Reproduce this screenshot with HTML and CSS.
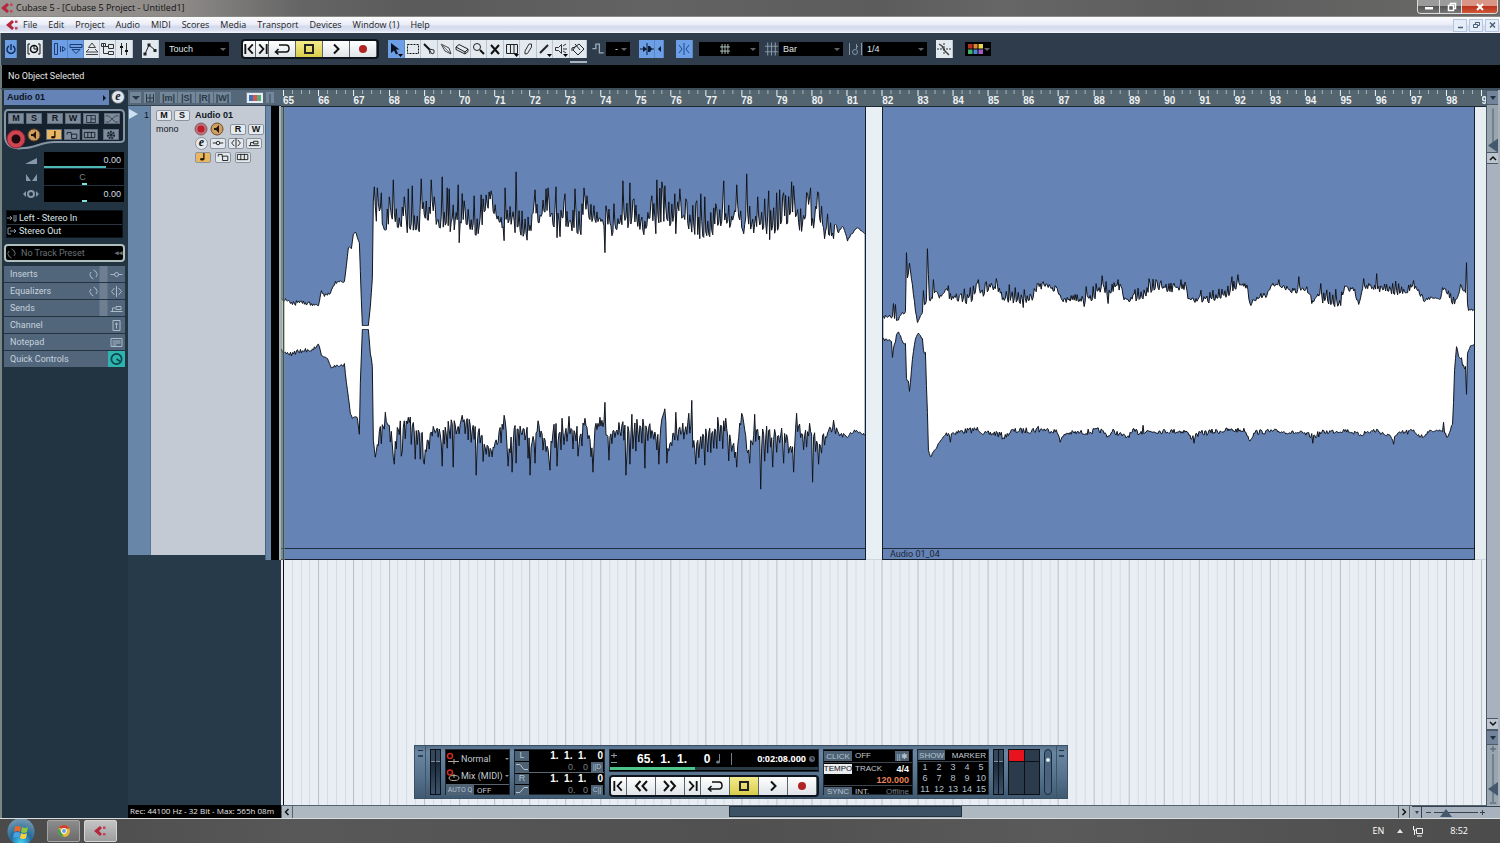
FILE: index.html
```html
<!DOCTYPE html>
<html lang="en">
<head>
    <meta charset="UTF-8">
    <meta name="viewport" content="width=device-width, initial-scale=1.0">
    <title>Cubase 5 - [Cubase 5 Project - Untitled1]</title>
    <link rel="stylesheet" href="styles.css">
</head>
<body>

    <!-- Shared icons -->
    <svg class="sprite" width="0" height="0" aria-hidden="true">
        <symbol id="i-logo" viewBox="0 0 14 12"><path d="M6 1 0 6l6 5 2-2-3-3 3-3z" fill="#b5283c"/><path d="M9 1.500h2.500v2.500H9zM9 8h2.500v2.500H9z" fill="#c4455a"/></symbol>
        <symbol id="i-power" viewBox="0 0 12 16"><path d="M4 5a4 4 0 1 0 4 0M6 3v6" fill="none" stroke="#12305c" stroke-width="1.500"/></symbol>
        <symbol id="i-clock" viewBox="0 0 16 16"><path d="M4 3H2v10h2M12 3h2v10h-2" fill="none" stroke="#111"/><circle cx="8" cy="8" r="3.500" fill="none" stroke="#111" stroke-width="1.500"/><path d="M8 5v3h3" fill="none" stroke="#111"/></symbol>
        <symbol id="i-insp" viewBox="0 0 16 16"><path d="M2.500 2.500h3v11h-3zM8.500 5v6M10.500 5.500l3 2.500-3 2.500z" fill="none" stroke="#1d3c70"/></symbol>
        <symbol id="i-info" viewBox="0 0 16 16"><path d="M2 3.500h12v3H2zM4 8.500h8l-4 4z" fill="none" stroke="#1d3c70"/></symbol>
        <symbol id="i-over" viewBox="0 0 16 16"><path d="M8 2 4.500 6.500h7zM5 8l-3 3h12l-3-3M2 13.500h12" fill="none" stroke="#444"/></symbol>
        <symbol id="i-pool" viewBox="0 0 16 16"><path d="M3.500 2v10.500H8M3.500 5.500H8M8.500 3.500h5v4h-5zM8.500 10.500h5v3h-5zM1.500 2.500h4v3h-4z" fill="none" stroke="#333"/></symbol>
        <symbol id="i-mixer" viewBox="0 0 16 16"><path d="M5.500 2v12M10.500 2v12" stroke="#333"/><path d="M4 6h3M9 10h3" stroke="#111" stroke-width="2"/></symbol>
        <symbol id="i-auto" viewBox="0 0 16 16"><path d="m3 13 4-9 6 5" fill="none" stroke="#222"/><path d="M1.500 11.500h3v3h-3zM5.500 2.500h3v3h-3zM11.500 8h3v3h-3z" fill="#222"/></symbol>
        <symbol id="i-prev" viewBox="0 0 14 14"><path d="M2.500 1.500v11M10.500 2 6 7l4.500 5" fill="none" stroke="#111" stroke-width="2"/></symbol>
        <symbol id="i-next" viewBox="0 0 14 14"><path d="M11.500 1.500v11M3.500 2 8 7l-4.500 5" fill="none" stroke="#111" stroke-width="2"/></symbol>
        <symbol id="i-cycle" viewBox="0 0 18 14"><path d="M6 3h7a3 3.500 0 0 1 0 7H2M5.500 7 2.500 10l3 2.500" fill="none" stroke="#111" stroke-width="1.500"/></symbol>
        <symbol id="i-stop" viewBox="0 0 14 14"><path d="M3 3h8v8H3z" fill="none" stroke="#222" stroke-width="2"/></symbol>
        <symbol id="i-play" viewBox="0 0 14 14"><path d="m5 2.500 4.500 4.500L5 11.500" fill="none" stroke="#111" stroke-width="2"/></symbol>
        <symbol id="i-rew" viewBox="0 0 16 14"><path d="M7.500 2 3 7l4.500 5M14 2 9.500 7l4.500 5" fill="none" stroke="#111" stroke-width="2"/></symbol>
        <symbol id="i-ffw" viewBox="0 0 16 14"><path d="M2 2l4.500 5L2 12M8.500 2 13 7l-4.500 5" fill="none" stroke="#111" stroke-width="2"/></symbol>
        <symbol id="i-rec" viewBox="0 0 14 14"><circle cx="7" cy="7" r="4" fill="#b02424"/></symbol>
        <symbol id="i-arrow" viewBox="0 0 16 16"><path d="M3 2v10l3-2.500 2 4 2-1-2-4h3.500z" fill="#0b1420"/><path d="M10 13h5l-2.500 3z" fill="#000"/></symbol>
        <symbol id="i-range" viewBox="0 0 16 16"><path d="M2.500 3.500h11v9h-11z" fill="none" stroke="#111" stroke-dasharray="2 1"/></symbol>
        <symbol id="i-split" viewBox="0 0 16 16"><path d="m3 3 6 6" stroke="#111" stroke-width="2"/><path d="m8 8 5 1v3l-2 1zM8 8l1 5" fill="none" stroke="#333"/></symbol>
        <symbol id="i-glue" viewBox="0 0 16 16"><path d="m3 3 8 4 2 6-6-3z" fill="none" stroke="#444"/><path d="m3 3 9 9" stroke="#777"/></symbol>
        <symbol id="i-erase" viewBox="0 0 16 16"><path d="m2 6 3-2.500 9 4.500-3 3zM2 6v2.500L11 13v-2M11 13l3-2.500V8" fill="none" stroke="#222"/></symbol>
        <symbol id="i-zoom" viewBox="0 0 16 16"><circle cx="6" cy="6" r="3.500" fill="none" stroke="#222"/><path d="m9 9 4 4" stroke="#111" stroke-width="2"/></symbol>
        <symbol id="i-mute" viewBox="0 0 16 16"><path d="m4 4 8 9M12 4l-8 9" stroke="#111" stroke-width="2"/></symbol>
        <symbol id="i-warp" viewBox="0 0 16 16"><path d="M2.500 3.500h11v9h-11zM6.500 3v10M10 3v10" fill="none" stroke="#222"/><path d="M10 13h5l-2.500 3z" fill="#000"/></symbol>
        <symbol id="i-draw" viewBox="0 0 16 16"><path d="M5 13V10l4-7h2.500v3l-4 6.500z" fill="none" stroke="#333"/></symbol>
        <symbol id="i-line" viewBox="0 0 16 16"><path d="m3 12 8-8" stroke="#222" stroke-width="2"/><path d="M10 13h5l-2.500 3z" fill="#000"/></symbol>
        <symbol id="i-scrub" viewBox="0 0 16 16"><path d="M2.500 6.500h3l3-3v9l-3-3h-3zM10 8h4M10 5l3-2M10 10l3 2" fill="none" stroke="#333"/><path d="M10 13h5l-2.500 3z" fill="#000"/></symbol>
        <symbol id="i-color" viewBox="0 0 16 16"><path d="m5 6 4-3 5 5-6 6-5-5zM5 6l-3 1v3M5 3l5 6" fill="none" stroke="#222"/></symbol>
        <symbol id="i-step" viewBox="0 0 14 16"><path d="M0 7.500h4v-5h4v10h5" fill="none" stroke="#9aabba" stroke-width="1.500"/></symbol>
        <symbol id="i-scroll" viewBox="0 0 16 16"><path d="M8 2v12M1 8h4M11 8h4" stroke="#0a1a30"/><path d="M4 5l4 3-4 3zM9 5h2l2 3-2 3H9z" fill="#0a1a30"/></symbol>
        <symbol id="i-left" viewBox="0 0 8 16"><path d="m6 5-3 3 3 3z" fill="#0a1a30"/></symbol>
        <symbol id="i-snap" viewBox="0 0 16 16"><path d="M8 2v12M3 4l3 4-3 4M13 4l-3 4 3 4" fill="none" stroke="#1b4b94"/></symbol>
        <symbol id="i-hash" viewBox="0 0 12 12"><path d="M2.500 0v12M6 0v12M9.500 0v12M0 3.500h12M0 8.500h12" stroke="currentColor"/></symbol>
        <symbol id="i-quant" viewBox="0 0 13 14"><path d="M.5 1v12M12.500 1v12M7.500 2v5M7 3l2 2" stroke="#8595a4"/><circle cx="6" cy="10" r="2.500" fill="none" stroke="#8595a4"/></symbol>
        <symbol id="i-cross" viewBox="0 0 16 16"><path d="M8 2v12M1 8h14" stroke="#333" stroke-dasharray="2 1"/><path d="m3 3 3 2 3 5 4 4" fill="none" stroke="#444" stroke-width="1.500"/></symbol>
        <symbol id="i-note" viewBox="0 0 16 11"><path d="M9 1v7" stroke="#241500" stroke-width="1.500"/><ellipse cx="7" cy="8" rx="2.500" ry="1.500" fill="#241500"/></symbol>
        <symbol id="i-lock" viewBox="0 0 16 11"><path d="M7.500 4.500h6v5h-6zM7 5V2.500H2.500V5" fill="none" stroke="currentColor"/></symbol>
        <symbol id="i-lanes" viewBox="0 0 16 11"><path d="M1.500 2.500h12v6h-12zM5.500 2v7M9.500 2v7" fill="none" stroke="currentColor"/></symbol>
        <symbol id="i-gear" viewBox="0 0 16 11"><circle cx="8" cy="5.500" r="3.500" fill="none" stroke="#1d2a36" stroke-width="2.500" stroke-dasharray="2 1"/><circle cx="8" cy="5.500" r="2" fill="#1d2a36"/></symbol>
        <symbol id="i-chan" viewBox="0 0 16 11"><path d="M3 1.500h10v8H3zM8 1v9M8 5.500h5" fill="none" stroke="#1d2a36"/></symbol>
        <symbol id="i-shuf" viewBox="0 0 16 11"><path d="M1 2h3l8 7h3M1 9h3l8-7h3" fill="none" stroke="#34424f"/></symbol>
        <symbol id="i-ins" viewBox="0 0 16 11"><path d="M2 5.500h4M10 5.500h4" stroke="currentColor"/><circle cx="8" cy="5.500" r="2" fill="none" stroke="currentColor"/></symbol>
        <symbol id="i-eq" viewBox="0 0 16 11"><path d="M8 0v11M6 2 3 5.500 6 9M10 2l3 3.500L10 9" fill="none" stroke="currentColor"/></symbol>
        <symbol id="i-send" viewBox="0 0 16 11"><path d="M2 8.500h12M4 8V5h3M7.500 3.500h5v3h-5z" fill="none" stroke="currentColor"/></symbol>
        <symbol id="i-faderch" viewBox="0 0 16 11"><path d="M4.500.5h7v10h-7zM8 2.500v6M6.500 4h3" fill="none" stroke="currentColor"/></symbol>
        <symbol id="i-pad" viewBox="0 0 16 11"><path d="M2.500 1.500h11v8h-11zM4 4h8M4 6h8M4 8h4" fill="none" stroke="currentColor"/></symbol>
        <symbol id="i-knob" viewBox="0 0 14 14"><circle cx="7" cy="7" r="4.500" fill="none" stroke="#07474a" stroke-width="1.500"/><path d="m7 7 3 2" stroke="#07474a" stroke-width="1.500"/></symbol>
        <symbol id="i-byp" viewBox="0 0 11 11"><path d="M3 8a3.500 3.500 0 0 1 0-5M8 3a3.500 3.500 0 0 1 0 5M5.500 10l-3-2M5.500 1l3 2" fill="none" stroke="currentColor"/></symbol>
        <symbol id="i-spk" viewBox="0 0 14 14"><circle cx="7" cy="7" r="6" fill="#cf9f62" stroke="#6d4a22"/><path d="M4 6h2l3-3v8L6 8H4z" fill="#24170a"/></symbol>
        <symbol id="i-recbtn" viewBox="0 0 20 20"><circle cx="10" cy="10" r="9" fill="#cf4450" stroke="#8f2632"/><circle cx="10" cy="10" r="4.500" fill="#1d0a0e"/></symbol>
        <symbol id="i-recdot" viewBox="0 0 14 14"><circle cx="7" cy="7" r="6" fill="#b9757d" stroke="#8a5a62"/><circle cx="7" cy="7" r="3.500" fill="#c01d28"/></symbol>
    </svg>

    <header class="titlebar">
        <svg class="logo"><use href="#i-logo"/></svg>
        <h1>Cubase 5 - [Cubase 5 Project - Untitled1]</h1>
        <div class="winbtns">
            <button aria-label="Minimize"><svg viewBox="0 0 20 12"><path d="M6 6h8v2.500H6z" fill="#fff"/></svg></button>
            <button aria-label="Restore"><svg viewBox="0 0 20 12"><path d="M7.500 4.500h5v5h-5zM9.500 4V2.500h5v5H13" fill="none" stroke="#fff" stroke-width="1.500"/></svg></button>
            <button class="close" aria-label="Close"><svg viewBox="0 0 20 12"><path d="m7 3 6 6M13 3 7 9" stroke="#fff" stroke-width="2"/></svg></button>
        </div>
    </header>

    <nav class="menubar">
        <svg class="logo"><use href="#i-logo"/></svg>
        <a href="#">File</a>
        <a href="#">Edit</a>
        <a href="#">Project</a>
        <a href="#">Audio</a>
        <a href="#">MIDI</a>
        <a href="#">Scores</a>
        <a href="#">Media</a>
        <a href="#">Transport</a>
        <a href="#">Devices</a>
        <a href="#">Window (1)</a>
        <a href="#">Help</a>
        <div class="docbtns">
            <button aria-label="Minimize project"><svg viewBox="0 0 13 12"><path d="M4 8.500h5" stroke="#4c5f7a" stroke-width="1.500"/></svg></button>
            <button aria-label="Restore project"><svg viewBox="0 0 13 12"><path d="M3.500 5.500h4v3h-4zM5.500 5V3.500h4v3H8" fill="none" stroke="#4c5f7a"/></svg></button>
            <button aria-label="Close project"><svg viewBox="0 0 13 12"><path d="m4 3.500 5 5M9 3.500l-5 5" stroke="#4c5f7a" stroke-width="1.500"/></svg></button>
        </div>
    </nav>

    <!-- Project toolbar -->
    <div class="toolbar">
        <button class="tb on narrow" aria-label="Activate project"><svg><use href="#i-power"/></svg></button>
        <button class="tb gap-m" aria-label="Constrain delay"><svg><use href="#i-clock"/></svg></button>
        <div class="group gap-m">
            <button class="tb on" aria-label="Show inspector"><svg><use href="#i-insp"/></svg></button>
            <button class="tb on" aria-label="Show info"><svg><use href="#i-info"/></svg></button>
            <button class="tb" aria-label="Show overview"><svg><use href="#i-over"/></svg></button>
            <button class="tb" aria-label="Open pool"><svg><use href="#i-pool"/></svg></button>
            <button class="tb" aria-label="Open mixer"><svg><use href="#i-mixer"/></svg></button>
        </div>
        <button class="tb gap-m" aria-label="Automation panel"><svg><use href="#i-auto"/></svg></button>
        <label class="drop w64 gap-s"><select aria-label="Automation mode"><option>Touch</option></select></label>
        <div class="keys gap-l">
            <button class="k-s" aria-label="Previous marker"><svg><use href="#i-prev"/></svg></button>
            <button class="k-s" aria-label="Next marker"><svg><use href="#i-next"/></svg></button>
            <button aria-label="Cycle"><svg><use href="#i-cycle"/></svg></button>
            <button class="lit" aria-label="Stop"><svg><use href="#i-stop"/></svg></button>
            <button aria-label="Play"><svg><use href="#i-play"/></svg></button>
            <button aria-label="Record"><svg><use href="#i-rec"/></svg></button>
        </div>
        <div class="group tools gap-m">
            <button class="tb on" aria-label="Object selection"><svg><use href="#i-arrow"/></svg></button>
            <button class="tb" aria-label="Range selection"><svg><use href="#i-range"/></svg></button>
            <button class="tb" aria-label="Split"><svg><use href="#i-split"/></svg></button>
            <button class="tb" aria-label="Glue"><svg><use href="#i-glue"/></svg></button>
            <button class="tb" aria-label="Erase"><svg><use href="#i-erase"/></svg></button>
            <button class="tb" aria-label="Zoom"><svg><use href="#i-zoom"/></svg></button>
            <button class="tb" aria-label="Mute"><svg><use href="#i-mute"/></svg></button>
            <button class="tb" aria-label="Time warp"><svg><use href="#i-warp"/></svg></button>
            <button class="tb" aria-label="Draw"><svg><use href="#i-draw"/></svg></button>
            <button class="tb" aria-label="Line"><svg><use href="#i-line"/></svg></button>
            <button class="tb" aria-label="Scrub"><svg><use href="#i-scrub"/></svg></button>
            <button class="tb colored" aria-label="Color"><svg><use href="#i-color"/></svg></button>
        </div>
        <svg class="tbicon gap-s"><use href="#i-step"/></svg>
        <label class="drop w24"><select aria-label="Nudge"><option>&nbsp; -</option></select></label>
        <div class="group gap-m">
            <button class="tb on" aria-label="Autoscroll"><svg><use href="#i-scroll"/></svg></button>
            <button class="tb on half" aria-label="Suspend autoscroll"><svg><use href="#i-left"/></svg></button>
        </div>
        <button class="tb on gap-l" aria-label="Snap"><svg><use href="#i-snap"/></svg></button>
        <button class="drop w60 gap-s" aria-label="Snap type"><svg class="hash"><use href="#i-hash"/></svg></button>
        <svg class="tbicon gap-s"><use href="#i-hash"/></svg>
        <label class="drop w64"><select aria-label="Grid type"><option>Bar</option></select></label>
        <svg class="tbicon gap-s"><use href="#i-quant"/></svg>
        <label class="drop w64"><select aria-label="Quantize"><option>1/4</option></select></label>
        <button class="tb gap-m" aria-label="Snap to zero crossing"><svg><use href="#i-cross"/></svg></button>
        <button class="drop w26 gap-l" aria-label="Event colors">
            <svg class="swatches" viewBox="0 0 15 10"><path d="M0 0h5v5H0z" fill="#b5302a"/><path d="M5 0h5v5H5z" fill="#e2892f"/><path d="M10 0h5v5h-5z" fill="#e5d84c"/><path d="M0 5h5v5H0z" fill="#45b36b"/><path d="M5 5h5v5H5z" fill="#4a86d8"/><path d="M10 5h5v5h-5z" fill="#a65cc8"/><path d="M5 0v10M10 0v10M0 5h15" stroke="#000"/></svg>
        </button>
    </div>

    <div class="infoline">No Object Selected</div>

    <main class="project">

        <aside class="inspector">
            <div class="insp-head">
                <h2>Audio 01</h2>
                <button class="edit" aria-label="Edit channel">e</button>
            </div>
            <div class="basic">
                <svg class="outline" viewBox="0 0 121 42" preserveAspectRatio="none"><path d="M4 1h112q4 0 4 4v25q0 3-4 3H50c-12 0-20 6-30 6C8 41 1 36 1 27V5q0-4 3-4z" fill="#15222e" stroke="#8595a3" stroke-width="2"/></svg>
                <div class="brow">
                    <button>M</button><button>S</button><button class="push">R</button><button>W</button>
                    <button aria-label="Open panel"><svg><use href="#i-chan"/></svg></button>
                    <button class="push" aria-label="Auto fades"><svg><use href="#i-shuf"/></svg></button>
                </div>
                <div class="brow">
                    <button class="round big" aria-label="Record enable"><svg><use href="#i-recbtn"/></svg></button>
                    <button class="round" aria-label="Monitor"><svg><use href="#i-spk"/></svg></button>
                    <button class="push warm" aria-label="Timebase"><svg><use href="#i-note"/></svg></button>
                    <button aria-label="Lock"><svg><use href="#i-lock"/></svg></button>
                    <button aria-label="Lanes"><svg><use href="#i-lanes"/></svg></button>
                    <button class="push" aria-label="Input transformer"><svg><use href="#i-gear"/></svg></button>
                </div>
            </div>
            <div class="levels">
                <svg viewBox="0 0 16 10"><path d="M2 9 14 3v6z" fill="#8698aa"/></svg><output class="vol">0.00</output>
                <svg viewBox="0 0 16 10"><path d="M3 2v7h5zM14 2v7H9z" fill="#8698aa"/></svg><output class="pan">C</output>
                <svg viewBox="0 0 16 10"><path d="M3 2 0 5l3 3zM13 2l3 3-3 3z" fill="#8698aa"/><circle cx="8" cy="5" r="3" fill="none" stroke="#8698aa" stroke-width="2"/></svg><output class="dly">0.00</output>
            </div>
            <div class="routing">
                <div><svg viewBox="0 0 10 8"><path d="M0 4h5M3 2l2 2-2 2M7 1v6h2V1" fill="none" stroke="#8c959c"/></svg>Left - Stereo In</div>
                <div><svg viewBox="0 0 10 8"><path d="M4 1H1v6h3M3 4h6M7 2l2 2-2 2" fill="none" stroke="#8c959c"/></svg>Stereo Out</div>
            </div>
            <button class="preset"><svg><use href="#i-byp"/></svg><span>No Track Preset</span><b>&#9666;&#9666;</b></button>
            <ul class="sections">
                <li class="split">Inserts<svg class="byp"><use href="#i-byp"/></svg><svg><use href="#i-ins"/></svg></li>
                <li class="split">Equalizers<svg class="byp"><use href="#i-byp"/></svg><svg><use href="#i-eq"/></svg></li>
                <li class="split">Sends<svg><use href="#i-send"/></svg></li>
                <li>Channel<svg><use href="#i-faderch"/></svg></li>
                <li>Notepad<svg><use href="#i-pad"/></svg></li>
                <li>Quick Controls<svg class="quick"><use href="#i-knob"/></svg></li>
            </ul>
        </aside>

        <section class="tracklist">
            <div class="list-head">
                <button aria-label="Track presets"><svg viewBox="0 0 10 10"><path d="M1 3h8L5 7z" fill="#2a3947"/></svg></button>
                <button aria-label="Divide track list"><svg viewBox="0 0 10 10"><path d="M1.500 1v8M5 1v8M8.500 1v8M1 9h8M1 5h8" stroke="#2a3947"/></svg></button>
                <div class="globals"><button>|m|</button><button>|S|</button><button>|R|</button><button>|W|</button></div>
                <button class="tcolor" aria-label="Track colors"><svg viewBox="0 0 16 10"><path d="M0 0h16v10H0z" fill="#e6ecf2"/><path d="M2 2h4v6H2z" fill="#3d6fb5"/><path d="M6 2h4v6H6z" fill="#d5574f"/><path d="M10 2h4v6h-4z" fill="#5aaa7a"/></svg></button>
                <button class="bar" aria-label="Show divider">|</button>
            </div>
            <div class="track">
                <div class="tnum"><svg viewBox="0 0 10 10"><path d="M0 0l9 5-9 5z" fill="#cfe0ee"/></svg>1</div>
                <div class="tbody">
                    <div class="trow"><button>M</button><button>S</button><strong>Audio 01</strong></div>
                    <div class="trow"><span class="mono">mono</span>
                        <button class="round" aria-label="Record enable"><svg><use href="#i-recdot"/></svg></button>
                        <button class="round" aria-label="Monitor"><svg><use href="#i-spk"/></svg></button>
                        <button class="far">R</button><button>W</button></div>
                    <div class="trow in">
                        <button class="edit" aria-label="Edit channel">e</button>
                        <button aria-label="Inserts"><svg><use href="#i-ins"/></svg></button>
                        <button aria-label="EQ"><svg><use href="#i-eq"/></svg></button>
                        <button aria-label="Sends"><svg><use href="#i-send"/></svg></button></div>
                    <div class="trow in wide">
                        <button class="warm" aria-label="Timebase"><svg><use href="#i-note"/></svg></button>
                        <button aria-label="Lock"><svg><use href="#i-lock"/></svg></button>
                        <button aria-label="Lanes"><svg><use href="#i-lanes"/></svg></button></div>
                </div>
                <div class="tcol"></div>
                <div class="tmeter"></div>
            </div>
            <div class="recinfo">Rec: 44100 Hz - 32 Bit - Max: 565h 08m</div>
        </section>

        <section class="arrange">
            <div class="ruler" id="ruler"></div>
            <div class="canvas">
                <svg class="grid" id="grid" viewBox="0 0 1204 100" preserveAspectRatio="none"></svg>
                <div class="lane">
                    <article class="event first">
                        <svg id="wave1" viewBox="281 106 585 442" preserveAspectRatio="none"></svg>
                        <div class="evname"></div>
                    </article>
                    <article class="event second">
                        <svg id="wave2" viewBox="882 106 592 442" preserveAspectRatio="none"></svg>
                        <div class="evname">Audio 01_04</div>
                    </article>
                </div>
                <div class="cursor"></div>
            </div>
            <div class="hscroll">
                <button aria-label="Scroll left"><svg viewBox="0 0 10 10"><path d="M6.500 2 3.500 5l3 3" fill="none" stroke="#111" stroke-width="1.500"/></svg></button>
                <div class="htrack"><div class="hthumb"></div></div>
                <button aria-label="Scroll right"><svg viewBox="0 0 10 10"><path d="m3.500 2 3 3-3 3" fill="none" stroke="#111" stroke-width="1.500"/></svg></button>
            </div>

            <!-- Floating transport panel -->
            <div class="transport">
                <button class="corner" aria-label="Panel options"></button>
                <div class="meter"><i></i><i></i></div>
                <div class="box modes">
                    <div><svg viewBox="0 0 14 13"><circle cx="4" cy="4" r="2.500" fill="none" stroke="#d3271f" stroke-width="1.500"/><path d="M2 9.500h11M8 7v5" stroke="#b5a79c"/></svg>Normal<em></em></div>
                    <div><svg viewBox="0 0 14 13"><circle cx="4" cy="3.500" r="2.500" fill="none" stroke="#d3271f" stroke-width="1.500"/><ellipse cx="8" cy="9" rx="5" ry="2.500" fill="none" stroke="#b5a79c"/><path d="M8 5v4" stroke="#b5a79c"/></svg>Mix (MIDI)<em></em></div>
                    <p><button>AUTO Q</button><span>OFF</span></p>
                </div>
                <div class="box locators">
                    <div><button>L</button><b>1.&nbsp; 1.&nbsp; 1.&nbsp;&nbsp;&nbsp; 0</b></div>
                    <div><button aria-label="Punch in"><svg viewBox="0 0 14 8"><path d="M1 1.500h4l4 5h4" fill="none" stroke="#b4c2cf"/></svg></button><small>0.&nbsp;&nbsp; 0</small><button class="pre">||D</button></div>
                    <div class="line"><button>R</button><b>1.&nbsp; 1.&nbsp; 1.&nbsp;&nbsp;&nbsp; 0</b></div>
                    <div><button aria-label="Punch out"><svg viewBox="0 0 14 8"><path d="M1 6.500h4l4-5h4" fill="none" stroke="#b4c2cf"/></svg></button><small>0.&nbsp;&nbsp; 0</small><button class="pre">C||</button></div>
                </div>
                <div class="center">
                    <div class="display">
                        <div class="time"><svg class="pm" viewBox="0 0 8 14"><path d="M1 3.500h6M4 1v5M1 10.500h6" stroke="#8d9ba8"/></svg><b>65.&nbsp; 1.&nbsp; 1.&nbsp;&nbsp;&nbsp;&nbsp; 0</b><svg class="sync" viewBox="0 0 20 14"><path d="M5.500 2v8M17.500 1v12" stroke="#73808c"/><ellipse cx="4" cy="10" rx="2" ry="1.500" fill="#73808c"/></svg><strong>0:02:08.000</strong><svg class="dot" viewBox="0 0 8 8"><circle cx="4" cy="4" r="3" fill="#596672"/><path d="M4 2v2h2" stroke="#111" fill="none"/></svg></div>
                        <div class="progress"><i></i></div>
                    </div>
                    <div class="keys">
                        <button class="k-m" aria-label="Go to start"><svg><use href="#i-prev"/></svg></button>
                        <button aria-label="Rewind"><svg><use href="#i-rew"/></svg></button>
                        <button aria-label="Forward"><svg><use href="#i-ffw"/></svg></button>
                        <button class="k-m" aria-label="Go to end"><svg><use href="#i-next"/></svg></button>
                        <button aria-label="Cycle"><svg><use href="#i-cycle"/></svg></button>
                        <button class="lit" aria-label="Stop"><svg><use href="#i-stop"/></svg></button>
                        <button aria-label="Play"><svg><use href="#i-play"/></svg></button>
                        <button aria-label="Record"><svg><use href="#i-rec"/></svg></button>
                    </div>
                </div>
                <div class="box tempo">
                    <div><button>CLICK</button><span>OFF</span><button class="end">||&#10033;</button></div>
                    <div class="line"><button class="act">TEMPO</button><span>TRACK</span><b>4/4</b></div>
                    <div class="bpm">120.000</div>
                    <div class="line"><button>SYNC</button><span>INT.</span><u>Offline</u></div>
                </div>
                <div class="box markers">
                    <div class="mhead"><button>SHOW</button><span>MARKER</span></div>
                    <div class="mgrid"><button>1</button><button>2</button><button>3</button><button>4</button><button>5</button><button>6</button><button>7</button><button>8</button><button>9</button><button>10</button><button>11</button><button>12</button><button>13</button><button>14</button><button>15</button></div>
                </div>
                <div class="meter"><i></i><i></i></div>
                <div class="clip"><i class="red"></i><i></i><i></i><i></i></div>
                <div class="level"><i></i></div>
                <button class="corner last" aria-label="Collapse panel"></button>
            </div>
        </section>

        <aside class="vscroll">
            <button class="dd" aria-label="Ruler options"><svg viewBox="0 0 12 12"><path d="M3 4h6L6 8z" fill="#22303c"/></svg></button>
            <div class="vzoom"><svg viewBox="0 0 12 46"><path d="M6 3v40" stroke="#4c5c6b"/><path d="M1 40l10-7v14z" fill="#44596c"/></svg></div>
            <button aria-label="Scroll up"><svg viewBox="0 0 12 12"><path d="M3 8l3-3 3 3" fill="none" stroke="#111" stroke-width="1.500"/></svg></button>
            <div class="vtrack"></div>
            <button aria-label="Scroll down"><svg viewBox="0 0 12 12"><path d="M3 4l3 3 3-3" fill="none" stroke="#111" stroke-width="1.500"/></svg></button>
            <button class="dd" aria-label="Zoom presets"><svg viewBox="0 0 12 12"><path d="M3 4h6L6 8z" fill="#22303c"/></svg></button>
            <div class="vzoom tall"><svg viewBox="0 0 12 60"><path d="M3 4h6M6 1v6M6 9v48M3 58h6" stroke="#4c5c6b"/><path d="M1 44l10-7v14z" fill="#44596c"/></svg></div>
            <div class="hzoom"><svg viewBox="0 0 88 12"><path d="M0 .5h88M9.500 0v12" stroke="#34424f"/><path d="M3 5h4l-2 3z" fill="#34424f"/><path d="M14 6.500h5M22 6.500h44M68 6.500h5M70.500 4v5" stroke="#34424f"/><path d="M28 11l6-8 6 8z" fill="#44596c"/></svg></div>
        </aside>
    </main>

    <footer class="taskbar">
        <button class="orb" aria-label="Start"><svg viewBox="0 0 30 25"><defs><radialGradient id="orb" cx="50%" cy="90%" r="80%"><stop offset="0" stop-color="#3fd0f5"/><stop offset=".5" stop-color="#246b9e"/><stop offset="1" stop-color="#6d93ad"/></radialGradient></defs><circle cx="15" cy="12.500" r="13.500" fill="url(#orb)"/><path d="M9 8q3-2 6 0l-1 5q-3-2-6 0z" fill="#e8672c"/><path d="M16 8q3 2 6 0l-1 5q-3 2-6 0z" fill="#8dc63f"/><path d="M8 14q3-2 6 0l-1 5q-3-2-6 0z" fill="#4aa3e0"/><path d="M15 14q3 2 6 0l-1 5q-3 2-6 0z" fill="#fbd03c"/></svg></button>
        <button class="task" aria-label="Chrome"><svg viewBox="0 0 14 14"><circle cx="7" cy="7" r="6" fill="#e3b93c"/><path d="M1.800 4A6 6 0 0 1 12.500 4.500H7z" fill="#cf3f32"/><path d="M1.800 4 5 10l2 3A6 6 0 0 1 1.800 4z" fill="#3f9c4c"/><circle cx="7" cy="7" r="2.500" fill="#6d9be0" stroke="#fff"/></svg></button>
        <button class="task active" aria-label="Cubase 5"><svg viewBox="0 0 14 12"><use href="#i-logo"/></svg></button>
        <div class="tray">
            <span>EN</span>
            <svg viewBox="0 0 8 8"><path d="M1 6l3-4 3 4z" fill="#e8e8e8"/></svg>
            <svg class="net" viewBox="0 0 12 12"><path d="M4.500 3.500h6v5h-6zM5 11h5M1.500 1v4h3M2.500 5v5" fill="none" stroke="#f2f2f2"/></svg>
            <time>8:52</time>
        </div>
    </footer>

    <script src="script.js"></script>
</body>
</html>
```

FILE: styles.css
```css
* {
    box-sizing: border-box;
}
body {
    margin: 0;
    height: 100vh;
    display: flex;
    flex-direction: column;
    overflow: hidden;
    background: #223240;
    font-family: "Liberation Sans", Arial, sans-serif;
    font-size: 9px;
    line-height: 12px;
    color: #d5dde4;
}
button, select {
    font: inherit;
    color: inherit;
    margin: 0;
    padding: 0;
    border: 0;
    background: none;
}
button {
    display: flex;
    align-items: center;
    justify-content: center;
    flex: none;
}
svg {
    display: block;
    flex: none;
}
h1, h2, p, ul {
    margin: 0;
    padding: 0;
    font-size: inherit;
}
i {
    display: block;
}
.sprite {
    position: absolute;
}
.logo {
    width: 14px;
    height: 12px;
}

/* Title bar */
.titlebar {
    height: 17px;
    flex: none;
    display: flex;
    align-items: center;
    padding: 0 2px 0 1px;
    background: linear-gradient(90deg, #9a9794 0, #8d8a88 180px, #656565 300px, #5a5a5a 420px, #636363 650px, #5c5c5c 880px, #666 1000px, #5c5c5c 1200px, #6b6a69 100%);
    border-bottom: 1px solid #8b8b85;
    font-family: "Open Sans", sans-serif;
    color: #111;
}
.titlebar h1 {
    flex: 1;
    margin-left: 1px;
    font-size: 9px;
    font-weight: normal;
}
.winbtns {
    display: flex;
    align-self: flex-start;
    height: 14px;
    border: 1px solid #ddd;
    border-top: 0;
    border-radius: 0 0 4px 4px;
    overflow: hidden;
}
.winbtns button {
    width: 22px;
    background: linear-gradient(#9b9b9b 45%, #555 50%, #777);
    border-right: 1px solid #ddd;
}
.winbtns .close {
    width: 35px;
    border: 0;
    background: linear-gradient(#d99586 45%, #b9341a 50%, #d0583a);
}
.winbtns svg {
    width: 20px;
    height: 12px;
}

/* Menu bar */
.menubar {
    height: 16px;
    flex: none;
    display: flex;
    align-items: center;
    padding-left: 6px;
    background: linear-gradient(#fbfbfd 0, #eceef8 45%, #d3daec 60%, #dde2f2 85%, #f7f8fa);
    font-family: "Open Sans", sans-serif;
    font-size: 9px;
}
.menubar a {
    color: #1c1c1c;
    text-decoration: none;
    margin: 0 8px 0 3px;
}
.menubar .logo {
    margin-right: 0;
}
.docbtns {
    display: flex;
    gap: 2px;
    margin-left: auto;
    padding-right: 1px;
}
.docbtns button {
    width: 14px;
    height: 13px;
    background: #e4edf8;
    border: 1px solid #b4c6de;
}
.docbtns svg {
    width: 13px;
    height: 12px;
}

/* Toolbar */
.toolbar {
    height: 32px;
    flex: none;
    display: flex;
    align-items: center;
    padding-left: 4px;
    background: #2e3c4b;
    border-left: 1px solid #7d8a8c;
}
.gap-s {
    margin-left: 6px;
}
.gap-m {
    margin-left: 9px;
}
.gap-l {
    margin-left: 12px;
}
.group {
    display: flex;
}
.tb {
    width: 17px;
    height: 18px;
    background: #e2e9ef;
    border-right: 1px solid #b9c4ce;
}
.group .tb {
    width: 16px;
}
.tools .tb:nth-child(odd), .group .tb:last-child {
    width: 17px;
}
.tb svg {
    width: 16px;
    height: 16px;
}
.tb.on {
    background: #6d9fe6;
    border-color: #5a86c6;
}
.tb.narrow {
    width: 12px;
}
.group .tb.half {
    width: 9px;
}
.tb.half svg {
    width: 8px;
}
.tb.colored {
    box-shadow: 0 3px #2e3c4b, 0 5px #a9b4bd;
}
.tools {
    width: 198px;
}
.tbicon {
    width: 13px;
    height: 14px;
    color: #8595a4;
    margin-right: 1px;
}
.drop {
    display: flex;
    align-items: center;
    height: 14px;
    background: #000;
    color: #dfe6ea;
    position: relative;
}
.drop::after {
    content: "";
    position: absolute;
    right: 3px;
    top: 6px;
    border: 3px solid transparent;
    border-top-color: #5d6468;
    border-bottom: 0;
}
.drop select {
    appearance: none;
    width: 100%;
    padding-left: 4px;
    font-size: 9px;
}
.w24 {
    width: 24px;
}
.w26 {
    width: 26px;
    justify-content: flex-start;
}
.w26::after {
    right: 1px;
}
.w60 {
    width: 60px;
}
.w64 {
    width: 64px;
}
.hash {
    width: 12px;
    height: 10px;
    color: #c6dcd2;
    margin-right: 8px;
}
.swatches {
    width: 15px;
    height: 10px;
    margin-left: 3px;
}
.keys {
    display: flex;
    height: 20px;
    border: 2px solid #0d141b;
    border-radius: 4px;
    overflow: hidden;
}
.keys button {
    width: 28px;
    background: linear-gradient(#fff, #dfe4e8);
    border-right: 1px solid #59636c;
}
.toolbar .keys button {
    width: 27px;
}
.toolbar .keys .k-s {
    width: 13px;
}
.keys svg {
    width: 18px;
    height: 14px;
}
.keys .k-s svg, .keys .k-m svg {
    width: 13px;
}
.keys .lit, .toolbar .keys .lit {
    background: linear-gradient(#f4ec8c, #d9cc4c);
}

.infoline {
    height: 23px;
    flex: none;
    background: #000;
    border-left: 2px solid #6c7a7c;
    padding-left: 6px;
    line-height: 23px;
    color: #e6e6e6;
}
.infoline, .routing, .preset, .sections {
    font-family: Roboto, "Liberation Sans", sans-serif;
}

/* Project window */
.project {
    flex: 1;
    min-height: 0;
    display: flex;
    border-top: 2px solid #3e4d5a;
    border-left: 2px solid #7a8683;
}

/* Inspector */
.inspector {
    width: 126px;
    flex: none;
    padding: 0 3px 0 2px;
    background: #223342;
}
.insp-head {
    display: flex;
    justify-content: space-between;
    height: 15px;
}
.insp-head h2 {
    width: 105px;
    padding-left: 3px;
    background: #6583b7;
    color: #0c1420;
    line-height: 15px;
    position: relative;
}
.insp-head h2::after {
    content: "";
    position: absolute;
    right: 3px;
    top: 5px;
    border: 3px solid transparent;
    border-left-color: #0c1420;
    border-right: 0;
}
.edit {
    width: 14px;
    height: 14px;
    border-radius: 50%;
    background: #dfe5ea;
    border: 1px solid #4d5a66;
    color: #17202a;
    font-family: "Liberation Serif", serif;
    font-size: 12px;
    font-style: italic;
    font-weight: bold;
    line-height: 8px;
    padding-bottom: 2px;
}
.basic {
    position: relative;
    height: 44px;
    margin-top: 4px;
    padding: 4px 3px 0 4px;
}
.outline {
    position: absolute;
    left: 0;
    top: 0;
    width: 100%;
    height: 42px;
}
.brow {
    position: relative;
    display: flex;
    align-items: center;
    gap: 2px;
    height: 11px;
    margin-bottom: 5px;
}
.brow button {
    width: 16px;
    height: 11px;
    background: #7d8b9a;
    color: #10181f;
    border: 1px solid #5d6b7a;
    font-weight: bold;
    line-height: 9px;
}
.brow svg, .trow svg {
    width: 14px;
    height: 10px;
}
.brow .push {
    margin-left: 3px;
}
.brow .warm, .trow .warm {
    background: #e9b661;
}
.brow .round, .trow .round {
    background: none;
    border: 0;
    width: 14px;
    height: 14px;
}
.brow .round svg, .trow .round svg {
    width: 14px;
    height: 14px;
}
.brow .round.big {
    width: 18px;
    height: 18px;
    margin-top: 8px;
    margin-left: -1px;
}
.brow .big svg {
    width: 20px;
    height: 20px;
}
.levels {
    display: grid;
    grid-template-columns: 16px 80px;
    column-gap: 5px;
    row-gap: 1px;
    justify-content: end;
    align-items: center;
    padding-right: 1px;
    margin-top: -1px;
}
.levels svg {
    width: 16px;
    height: 10px;
}
.levels output {
    height: 16px;
    padding-right: 3px;
    text-align: right;
    line-height: 16px;
    background: linear-gradient(#7fe0dc, #7fe0dc) 38px 14px / 5px 2px no-repeat #000;
}
.levels .vol {
    background: linear-gradient(#4fb9b5, #4fb9b5) 0 14px / 62px 2px no-repeat #000;
}
.levels .pan {
    text-align: center;
    color: #78828a;
}
.routing {
    margin: 8px 2px 0;
    border: 1px solid #0d151c;
    background: #000;
    color: #dde3e8;
}
.routing div {
    display: flex;
    align-items: center;
    gap: 2px;
    height: 13px;
}
.routing div + div {
    border-top: 1px solid #2b3640;
}
.routing svg {
    width: 10px;
    height: 8px;
}
.preset {
    width: 100%;
    height: 18px;
    margin: 6px 0 4px;
    justify-content: flex-start;
    background: #000;
    border: 2px solid #aebfbe;
    border-radius: 4px;
    color: #6a7276;
}
.preset svg {
    width: 11px;
    height: 11px;
    margin-right: 4px;
}
.preset b {
    margin-left: auto;
    font-size: 7px;
}
.sections {
    list-style: none;
    color: #c6d2dd;
}
.sections li {
    display: flex;
    align-items: center;
    height: 16px;
    margin-bottom: 1px;
    padding-left: 6px;
    background: #52667b;
}
.sections svg {
    width: 17px;
    height: 11px;
    margin-left: auto;
    color: #a9bac9;
}
.sections .split {
    background: linear-gradient(90deg, #52667b 95px, #6d7f91 96px, #6d7f91 103px, #52667b 104px);
}
.sections .byp {
    width: 11px;
    margin-right: 5px;
}
.sections .byp + svg {
    margin-left: 4px;
}
.sections .quick {
    height: 16px;
    background: #2fb3ae;
}

/* Track list */
.tracklist {
    width: 153px;
    flex: none;
    display: flex;
    flex-direction: column;
    background: #263a4a;
}
.list-head {
    display: flex;
    align-items: center;
    gap: 3px;
    height: 16px;
    flex: none;
    padding-left: 2px;
    background: #55687a;
    border-bottom: 1px solid #34434f;
    color: #2a3947;
}
.list-head button {
    width: 11px;
    height: 11px;
    background: #74879a;
}
.list-head svg {
    width: 10px;
    height: 10px;
}
.globals {
    display: flex;
    gap: 1px;
    margin-left: 2px;
    font-weight: bold;
}
.list-head .globals button {
    width: 17px;
}
.list-head .tcolor {
    width: 17px;
    margin-left: 12px;
}
.list-head .tcolor svg {
    width: 16px;
}
.list-head .bar {
    width: 8px;
}
.track {
    display: flex;
    height: 454px;
    flex: none;
}
.tnum {
    width: 23px;
    height: 449px;
    padding: 3px 1px;
    display: flex;
    justify-content: space-between;
    background: #6786a8;
    border-right: 1px solid #5b7590;
    color: #0c1420;
}
.tnum svg {
    width: 10px;
    height: 10px;
}
.tbody {
    flex: 1;
    height: 449px;
    padding: 2px 1px 0 5px;
    background: #c3cad3;
    color: #10161c;
}
.trow {
    display: flex;
    align-items: center;
    gap: 2px;
    height: 14px;
}
.trow button {
    width: 16px;
    height: 11px;
    background: #e4e9ee;
    border: 1px solid #8a949e;
    border-radius: 2px;
    font-weight: bold;
    color: #111;
}
.trow strong {
    margin-left: 3px;
}
.trow .mono {
    width: 36px;
}
.trow .far {
    margin-left: 4px;
}
.trow.in {
    padding-left: 39px;
}
.trow.wide {
    gap: 4px;
}
.trow .edit {
    width: 13px;
    height: 13px;
    border-radius: 50%;
}
.tcol {
    width: 6px;
    background: #6786a8;
    border-left: 1px solid #4d6580;
}
.tmeter {
    width: 10px;
    background: #000;
    border-right: 2px solid #a9b0b4;
}
.recinfo {
    height: 13px;
    margin-top: auto;
    padding-left: 2px;
    background: #000;
    color: #e4e4e4;
    font-family: "Open Sans", sans-serif;
    font-size: 8px;
    white-space: nowrap;
}

/* Arrangement */
.arrange {
    flex: 1;
    min-width: 0;
    position: relative;
    display: flex;
    flex-direction: column;
}
.ruler {
    position: relative;
    display: flex;
    height: 16px;
    flex: none;
    padding-left: 2px;
    overflow: hidden;
    background: #55656f;
    color: #edf1f3;
    font-size: 10px;
    font-weight: bold;
}
.ruler svg {
    position: absolute;
    left: 0;
    top: 0;
    width: 100%;
    height: 6px;
}
.ruler span {
    flex: 352 1 0;
    min-width: 0;
    padding-top: 5px;
}
.ruler span:last-child {
    flex-grow: 45;
    overflow: hidden;
}
.canvas {
    position: relative;
    flex: 1;
    min-height: 0;
    background: #e9eef5;
    border-top: 1px solid #1b2733;
}
.grid {
    position: absolute;
    width: 100%;
    height: 100%;
}
.lane {
    position: relative;
    display: flex;
    height: 453px;
    border-bottom: 1px solid #d0d6dc;
    background: linear-gradient(90deg, #eaf1f6, #e6eef2);
}
.event {
    height: 453px;
    background: #6583b4;
    border-right: 1px solid #16202c;
    border-bottom: 1px solid #16202c;
    display: flex;
    flex-direction: column;
    min-width: 0;
}
.first {
    flex: 585 1 0;
}
.second {
    flex: 592 1 0;
    margin-left: 16px;
    margin-right: 11px;
    border-left: 1px solid #16202c;
}
.event svg {
    width: 100%;
    height: 441px;
}
.evname {
    flex: 1;
    padding-left: 7px;
    border-top: 1px solid #1f2c40;
    color: #1a2638;
    font-family: Roboto, "Liberation Sans", sans-serif;
    line-height: 10px;
}
.cursor {
    position: absolute;
    left: 0;
    top: 0;
    bottom: 0;
    width: 4px;
    background: linear-gradient(90deg, transparent 2px, #111 2px, #111 3px, transparent 3px);
}
.cursor::before {
    content: "";
    display: block;
    height: 453px;
    background: rgba(122, 145, 125, 0.5);
}
.hscroll {
    display: flex;
    height: 13px;
    flex: none;
    border-top: 1px solid #55636f;
    background: #aeb8c1;
}
.hscroll button {
    width: 12px;
    border: 1px solid #55636f;
    border-width: 0 1px;
}
.hscroll svg {
    width: 10px;
    height: 10px;
}
.htrack {
    flex: 1;
    display: grid;
    grid-template-columns: 79fr 42fr 79fr;
}
.hthumb {
    grid-column: 2;
    height: 11px;
    background: #3d5165;
    border: 1px solid #22303c;
}
.hscroll button:last-child {
    margin-right: 76px;
}

/* Right side scroll and zoom strip */
.vscroll {
    width: 14px;
    flex: none;
    position: relative;
    display: flex;
    flex-direction: column;
    padding-right: 2px;
    background: #a7b2be;
    border-left: 1px solid #4b5a67;
}
.vscroll button {
    height: 12px;
    background: #bcc5cd;
    border: 1px solid #4b5a67;
    border-width: 1px 0;
}
.vscroll svg {
    width: 12px;
    height: 12px;
}
.vscroll .dd {
    height: 15px;
    background: #73849a;
}
.vzoom {
    background: #98a4ae;
}
.vscroll .vzoom svg {
    height: 47px;
}
.vscroll .tall svg {
    height: 60px;
}
.vtrack {
    flex: 1;
}
.hzoom {
    position: absolute;
    right: 0;
    bottom: 0;
    height: 12px;
}
.vscroll .hzoom svg {
    width: 88px;
    height: 12px;
    background: #a7b2be;
}
.vzoom.tall {
    margin-bottom: 13px;
}

/* Transport panel */
.transport {
    position: absolute;
    left: 133px;
    bottom: 19px;
    width: 654px;
    height: 54px;
    display: flex;
    gap: 4px;
    padding: 3px 1px;
    background: linear-gradient(#57708a, #6986a2 12%, #56718b 60%, #405a72);
    border: 1px solid #3d5164;
    color: #c2cad1;
}
.corner {
    width: 10px;
    margin: -3px 0;
    border-right: 1px solid #3d5368;
    position: relative;
}
.corner::before {
    content: "";
    position: absolute;
    left: 2px;
    top: 4px;
    width: 5px;
    height: 4px;
    border-top: 1px solid #1f2f3e;
    border-bottom: 2px solid #2f4457;
}
.corner.last {
    border-right: 0;
    border-left: 1px solid #3d5368;
}
.meter {
    width: 11px;
    flex: none;
    display: flex;
    gap: 1px;
    padding: 1px;
    background: #0b1017;
}
.meter i {
    flex: 1;
    background: linear-gradient(#35475b 11px, #7f8f9e 11px, #7f8f9e 12px, #1b2a3a 12px, #3a5068 95%);
}
.box {
    background: #000;
    border: 1px solid #1d2833;
    flex: none;
}
.box button {
    background: #4e6276;
    color: #b4c2cf;
    height: 10px;
    line-height: 9px;
}
.modes {
    width: 65px;
    font-family: Roboto, "Liberation Sans", sans-serif;
}
.modes div {
    display: flex;
    align-items: center;
    gap: 1px;
    height: 17px;
    white-space: nowrap;
}
.modes svg {
    width: 14px;
    height: 13px;
}
.modes em {
    margin-left: auto;
    border: 2px solid transparent;
    border-top-color: #8a9198;
    border-bottom: 0;
}
.modes p {
    display: flex;
    gap: 3px;
    border-top: 1px solid #59656f;
    font-size: 8px;
    white-space: nowrap;
}
.modes button {
    width: 28px;
    font-size: 7px;
}
.locators {
    width: 91px;
}
.locators div {
    display: flex;
    align-items: center;
    justify-content: flex-end;
    height: 11px;
    padding-right: 1px;
}
.locators .line {
    border-top: 1px solid #59656f;
    height: 12px;
}
.locators button {
    width: 14px;
    margin-right: auto;
}
.locators .pre {
    width: 12px;
    margin: 0 0 0 3px;
    font-size: 7px;
}
.locators svg {
    width: 14px;
    height: 8px;
}
.locators b {
    color: #fff;
    font-size: 10px;
}
.locators small {
    font-size: 9px;
    color: #77818a;
}
.center {
    width: 210px;
    flex: none;
}
.center .keys {
    height: 22px;
    margin-top: 3px;
}
.center .keys button {
    flex: 1 1 0;
}
.center .keys .k-m {
    flex: none;
    width: 16px;
}
.display {
    height: 23px;
    background: #000;
    border: 1px solid #1d2833;
}
.time {
    display: flex;
    align-items: center;
    height: 17px;
    color: #fff;
}
.pm {
    width: 8px;
    height: 14px;
}
.time b {
    margin-left: 19px;
    font-size: 12px;
    white-space: nowrap;
}
.sync {
    width: 20px;
    height: 14px;
    margin-left: 4px;
}
.time strong {
    margin-left: auto;
    font-family: "Open Sans", sans-serif;
    font-size: 9px;
}
.dot {
    width: 8px;
    height: 8px;
    margin: 0 2px;
}
.progress {
    height: 3px;
    background: #2b3b46;
}
.progress i {
    width: 41%;
    height: 3px;
    background: #4cc389;
}
.tempo {
    width: 90px;
}
.tempo div {
    display: flex;
    gap: 3px;
    align-items: center;
    height: 12px;
    padding-right: 3px;
}
.tempo button {
    width: 28px;
    font-size: 8px;
}
.tempo span {
    font-size: 8px;
}
.tempo .end {
    width: 14px;
    margin-left: auto;
}
.tempo .act {
    background: #e9edf0;
    color: #111;
}
.tempo .line {
    border-top: 1px solid #3c4650;
}
.tempo b {
    margin-left: auto;
    color: #fff;
}
.tempo u {
    margin-left: auto;
    text-decoration: none;
    color: #77818a;
    font-size: 8px;
}
.tempo .bpm {
    justify-content: flex-end;
    height: 11px;
    color: #e8825a;
    font-size: 9px;
    font-weight: bold;
}
.markers {
    width: 72px;
    font-size: 8px;
}
.mhead {
    display: flex;
    justify-content: space-between;
    height: 12px;
    padding-right: 2px;
    border-bottom: 1px solid #3c4650;
}
.mhead button {
    width: 27px;
}
.mgrid {
    display: grid;
    grid-template-columns: repeat(5, 1fr);
    grid-auto-rows: 11px;
}
.mgrid button {
    background: none;
    font-size: 9px;
}
.clip {
    width: 32px;
    flex: none;
    display: grid;
    grid-template: 11px 1fr / 1fr 1fr;
    gap: 1px;
    padding: 1px;
    background: #0b1017;
}
.clip i {
    background: #2b3b4c;
}
.clip .red {
    background: #e8131c;
}
.level {
    width: 8px;
    flex: none;
    padding-top: 8px;
    background: #4a6480;
    border: 1px solid #1c2b3a;
    border-radius: 4px;
}
.level i {
    width: 4px;
    height: 4px;
    margin: 0 auto;
    border-radius: 50%;
    background: #dcebf5;
}

/* Windows taskbar */
.taskbar {
    height: 25px;
    flex: none;
    display: flex;
    align-items: center;
    gap: 4px;
    padding-left: 6px;
    background: linear-gradient(90deg, #4a4a4a, #585858 20%, #505050 50%, #5a5a5a 70%, #4c4c4c);
    border-top: 1px solid #d9dedc;
    font-family: "Open Sans", sans-serif;
    color: #fff;
}
.orb svg {
    width: 30px;
    height: 25px;
}
.orb {
    margin-right: 7px;
}
.task {
    width: 33px;
    height: 22px;
    background: linear-gradient(#8c8c8c, #6b6b6b);
    border: 1px solid #a5a5a5;
    border-radius: 2px;
}
.task.active {
    background: linear-gradient(#c4c4c4, #9d9d9d);
    border-color: #d4d4d4;
}
.task svg {
    width: 14px;
    height: 14px;
}
.tray {
    display: flex;
    align-items: center;
    gap: 12px;
    margin-left: auto;
    padding-right: 32px;
}
.tray svg {
    width: 8px;
    height: 8px;
}
.tray .net {
    width: 12px;
    height: 12px;
    margin-left: -4px;
}
.tray time {
    margin-left: 14px;
}
```

FILE: script.js
```js
// Ruler labels, ticks and grid
const FIRST_BAR = 65;
const LAST_BAR = 99;
const BAR_WIDTH = 35.2;

let labels = '';
let ticks = '';
let lines = '';
for (let bar = FIRST_BAR; bar <= LAST_BAR; bar++) {
    // the last bar is only a few pixels wide, there is room for one digit
    labels += '<span>' + (bar === LAST_BAR ? '9' : bar) + '</span>';
    for (let beat = 0; beat < 4; beat++) {
        const x = Math.round(2 + (bar - FIRST_BAR) * BAR_WIDTH + beat * BAR_WIDTH / 4) + 0.5;
        if (x > 1204) continue;
        ticks += '<path d="M' + x + ' 0v' + (beat ? 4 : 6) + '" stroke="' + (beat ? '#a9b3ba' : '#f2f4f5') + '"/>';
        lines += '<path d="M' + x + ' 0v100" stroke="' + (beat ? '#d6dbe1' : '#b9bfc6') + '"/>';
    }
}
document.getElementById('ruler').innerHTML =
    '<svg viewBox="0 0 1204 6" preserveAspectRatio="none">' + ticks + '</svg>' + labels;
document.getElementById('grid').innerHTML = lines;

// Small seeded generator so that the waveforms always look the same
function makeRandom(seed) {
    return function () {
        seed = (seed * 16807) % 2147483647;
        return seed / 2147483647;
    };
}

// env: [x, y, noise] points, peaks: [x, y] single sample spikes
// out is -1 for the top edge and 1 for the bottom edge
function edge(env, peaks, seed, out) {
    const random = makeRandom(seed);
    const spikes = new Map(peaks);
    const points = [];
    for (let i = 0; i < env.length - 1; i++) {
        const [x0, y0, n0 = 0] = env[i];
        const [x1, y1] = env[i + 1];
        for (let x = x0; x < x1; x++) {
            let y = y0 + (y1 - y0) * (x - x0) / (x1 - x0);
            if (n0 > 10) {
                // dense parts: one sample in three sticks out, the rest stay inside
                y += out * (x % 3 ? -0.6 : 0.8) * random() * n0;
            } else {
                y += (random() - 0.5) * n0;
            }
            if (spikes.has(x)) y = spikes.get(x);
            points.push([x, y]);
        }
    }
    points.push(env[env.length - 1].slice(0, 2));
    return points;
}

function drawWave(id, top, bottom) {
    const toPath = list => list.map(p => (p[0] + 0.5) + ' ' + p[1].toFixed(1)).join('L');
    const t = toPath(top);
    const b = toPath(bottom);
    document.getElementById(id).innerHTML =
        '<path d="M' + t + 'L' + toPath([...bottom].reverse()) + 'z" fill="#fff"/>' +
        '<path d="M' + t + 'M' + b + '" fill="none" stroke="#10151e" stroke-linejoin="bevel" shape-rendering="crispEdges"/>';
}

const top1 = edge([
    [281, 300, 3], [287, 299, 5], [293, 303, 5], [300, 302, 4], [318, 304, 3], [321, 291, 3], [324, 295, 3], [330, 293, 3],
    [335, 282, 3], [344, 281, 2], [346, 265], [348, 247, 3], [351, 248, 2], [353, 233, 2], [356, 232, 3], [359, 242],
    [361, 300], [362, 325], [368, 325], [370, 306], [372, 278], [373, 190, 18], [376, 215, 24], [379, 204, 18], [385, 222, 20],
    [393, 208, 24], [400, 222, 20], [404, 212, 20], [408, 225, 18], [418, 222, 20], [421, 204, 16], [427, 214, 20],
    [432, 206, 20], [438, 220, 20], [448, 218, 28], [456, 216, 26], [462, 206, 24], [468, 218, 26], [478, 222, 20],
    [485, 206, 14], [490, 198, 12], [494, 210, 12], [500, 218, 18], [506, 215, 20], [516, 215, 26], [528, 225, 18],
    [534, 208, 20], [540, 218, 20], [545, 203, 14], [549, 206, 20], [555, 222, 24], [564, 212, 20], [572, 222, 20],
    [580, 224, 18], [584, 205, 12], [592, 214, 12], [600, 216, 10], [604, 222, 14], [607, 213, 14], [613, 226, 14],
    [622, 218, 20], [635, 212, 20], [645, 224, 16], [652, 210, 20], [658, 206, 30], [665, 206, 26], [670, 220, 24],
    [679, 204, 16], [684, 216, 24], [695, 222, 26], [706, 224, 22], [716, 220, 24], [724, 210, 20], [730, 222, 18],
    [737, 206, 16], [743, 228, 14], [747, 206, 20], [752, 220, 20], [762, 222, 24], [775, 218, 28], [788, 212, 24],
    [793, 208, 24], [803, 220, 18], [809, 198, 16], [813, 222, 16], [818, 202, 18], [824, 224, 18], [835, 226, 9],
    [840, 230, 3], [844, 226, 2], [848, 239, 3], [853, 233, 3], [857, 226, 3], [860, 229, 2], [865, 233]
], [
    [374, 186], [377, 187], [381, 192], [384, 229], [389, 196], [393, 179], [404, 196], [407, 232], [408, 188], [412, 185], [419, 231],
    [421, 178], [431, 179], [434, 196], [442, 176], [447, 187], [449, 188], [450, 231], [458, 184], [459, 242], [464, 200], [474, 195],
    [478, 233], [481, 194], [491, 190], [504, 240], [505, 187], [515, 232], [516, 171], [531, 230], [535, 189], [546, 188], [548, 187],
    [556, 186], [557, 237], [560, 236], [565, 193], [575, 188], [581, 234], [584, 187], [587, 195], [605, 252], [607, 211],
    [614, 203], [612, 235], [623, 180], [630, 182], [634, 198], [652, 195], [656, 233], [657, 179], [662, 181], [665, 185],
    [676, 233], [680, 188], [686, 198], [697, 200], [700, 238], [701, 193], [705, 196], [710, 236], [716, 203], [724, 180],
    [737, 184], [744, 233], [747, 173], [758, 196], [765, 198], [769, 190], [770, 239], [777, 192], [780, 189], [784, 192],
    [792, 181], [794, 185], [808, 193], [811, 187], [818, 191], [825, 238], [834, 238]
], 17, -1);

const bottom1 = edge([
    [281, 350, 3], [290, 354, 5], [298, 351, 4], [312, 349, 4], [318, 343, 2], [321, 355, 2], [327, 358, 2], [331, 367, 3],
    [344, 364, 2], [347, 390, 3], [350, 413, 4], [353, 418, 3], [357, 417, 6], [359, 434], [360, 382], [362, 329],
    [368, 329], [370, 352, 4], [372, 366], [373, 440], [375, 457], [378, 438, 16], [385, 424, 10], [389, 432, 18],
    [394, 455, 14], [397, 435, 24], [408, 428, 24], [418, 436, 24], [425, 453, 12], [432, 430, 16], [442, 436, 22],
    [455, 430, 20], [470, 428, 18], [479, 440, 20], [484, 450, 12], [492, 454, 10], [498, 438, 18], [505, 428, 14],
    [509, 450, 16], [514, 436, 18], [524, 434, 22], [531, 446, 20], [537, 430, 20], [544, 442, 16], [549, 456, 12],
    [554, 430, 20], [560, 440, 20], [570, 432, 20], [580, 440, 22], [586, 430, 18], [592, 455, 14], [596, 430, 12],
    [603, 424, 12], [608, 440, 12], [618, 432, 26], [632, 436, 28], [650, 434, 22], [659, 445, 12], [662, 420, 6],
    [665, 408, 6], [668, 450, 8], [673, 440, 16], [677, 434, 16], [690, 430, 16], [695, 450, 18], [705, 438, 22],
    [722, 430, 26], [730, 442, 14], [737, 456, 10], [740, 422, 8], [743, 418, 8], [748, 452, 10], [753, 435, 22],
    [770, 440, 18], [784, 436, 20], [790, 450, 14], [795, 445, 12], [797, 420, 14], [801, 435, 16], [810, 442, 28],
    [820, 450, 18], [826, 434, 9], [834, 429, 8], [842, 434, 6], [850, 434, 3], [855, 430, 3], [865, 435]
], [
    [385, 412], [394, 464], [401, 456], [408, 417], [415, 459], [424, 464], [442, 466], [453, 467], [462, 415], [476, 475],
    [504, 415], [508, 466], [512, 472], [516, 463], [530, 475], [535, 463], [550, 470], [557, 466], [562, 418], [569, 416],
    [578, 456], [585, 418], [593, 472], [600, 417], [605, 402], [609, 460], [626, 475], [630, 464], [632, 414], [645, 468],
    [659, 464], [667, 463], [676, 412], [689, 413], [692, 400], [696, 464], [705, 465], [718, 417], [726, 418], [737, 467],
    [742, 413], [750, 463], [755, 414], [761, 489], [765, 461], [773, 467], [784, 463], [794, 472], [797, 413], [810, 423],
    [813, 482], [819, 464], [834, 420]
], 91, 1);

const top2 = edge([
    [882, 317, 3], [887, 315, 3], [891, 318, 6], [896, 320, 3], [900, 314, 3], [904, 311], [905, 252], [906, 279, 4],
    [908, 264, 4], [911, 284, 3], [914, 310, 2], [916, 322], [919, 316, 2], [922, 310, 9], [925, 300], [926, 248],
    [928, 300, 4], [931, 297, 6], [934, 290, 4], [938, 296, 4], [945, 289, 8], [950, 298, 10], [960, 296, 14], [970, 294, 12],
    [976, 282, 6], [981, 296, 12], [986, 288, 8], [995, 284, 8], [1002, 298, 11], [1010, 294, 14], [1020, 298, 11],
    [1030, 297, 10], [1036, 284, 8], [1055, 288, 8], [1060, 300, 8], [1070, 297, 8], [1082, 299, 11], [1092, 295, 12],
    [1102, 282, 6], [1106, 298, 8], [1111, 286, 10], [1120, 288, 8], [1124, 300, 6], [1134, 296, 11], [1145, 291, 11],
    [1155, 284, 10], [1170, 287, 10], [1185, 285, 8], [1188, 300, 8], [1200, 297, 11], [1215, 295, 12], [1225, 291, 12],
    [1233, 288, 12], [1238, 285, 8], [1246, 284, 5], [1249, 302, 4], [1260, 295, 8], [1267, 293, 6], [1271, 284, 6],
    [1290, 288, 9], [1308, 290, 8], [1311, 300, 6], [1320, 294, 14], [1338, 300, 10], [1346, 287, 6], [1354, 290, 6],
    [1358, 303, 4], [1362, 287, 9], [1385, 287, 11], [1402, 290, 8], [1414, 286, 8], [1424, 300, 3], [1430, 297, 2],
    [1440, 299, 2], [1442, 286, 4], [1448, 294, 9], [1454, 302, 4], [1458, 294, 4], [1460, 285, 3], [1465, 292],
    [1468, 309, 3], [1474, 309]
], [
    [892, 303], [894, 304], [922, 290], [932, 279], [947, 285], [977, 279], [995, 278], [985, 281], [1008, 284], [1042, 281],
    [1085, 286], [1105, 281], [1117, 279], [1148, 278], [1155, 279], [1180, 279], [1231, 276], [1237, 274], [1278, 279],
    [1298, 276], [1363, 278], [1376, 273], [1413, 280], [1022, 307], [1083, 306], [1107, 303], [1340, 305], [1250, 305], [1466, 262]
], 45, -1);

const bottom2 = edge([
    [882, 339, 3], [890, 340, 4], [892, 346, 9], [895, 335, 3], [897, 331, 2], [901, 341, 3], [904, 343], [905, 378, 4],
    [909, 382], [911, 358, 2], [914, 338, 2], [917, 333, 2], [921, 338], [922, 348, 8], [924, 352], [925, 385], [926, 412],
    [927, 450], [929, 457, 2], [935, 447, 3], [944, 434, 5], [955, 432, 6], [977, 429, 4], [983, 434, 6], [995, 433, 7],
    [1003, 437, 4], [1010, 431, 6], [1030, 430, 7], [1040, 429, 5], [1055, 431, 4], [1060, 439, 4], [1065, 433, 5],
    [1085, 432, 6], [1100, 430, 4], [1107, 436, 4], [1112, 431, 5], [1125, 437, 5], [1132, 432, 7], [1150, 431, 5],
    [1185, 431, 4], [1190, 437, 5], [1200, 433, 6], [1225, 430, 5], [1244, 430, 4], [1249, 440, 3], [1254, 432, 5],
    [1275, 431, 4], [1300, 433, 5], [1313, 436, 6], [1322, 432, 5], [1345, 430, 4], [1358, 434, 6], [1376, 430, 5],
    [1392, 438, 5], [1400, 433, 6], [1413, 431, 5], [1422, 437, 3], [1428, 431, 2], [1441, 430, 4], [1447, 437, 3],
    [1452, 424], [1453, 402], [1454, 370], [1456, 346, 3], [1458, 355, 6], [1462, 362, 8], [1465, 366], [1467, 352, 2],
    [1470, 346, 2], [1474, 344]
], [
    [891, 357], [908, 391], [949, 442], [1037, 426], [1059, 442], [1142, 425], [1193, 443], [1312, 443], [1393, 444],
    [1443, 422], [1466, 394]
], 7, 1);

drawWave('wave1', top1, bottom1);
drawWave('wave2', top2, bottom2);
```
